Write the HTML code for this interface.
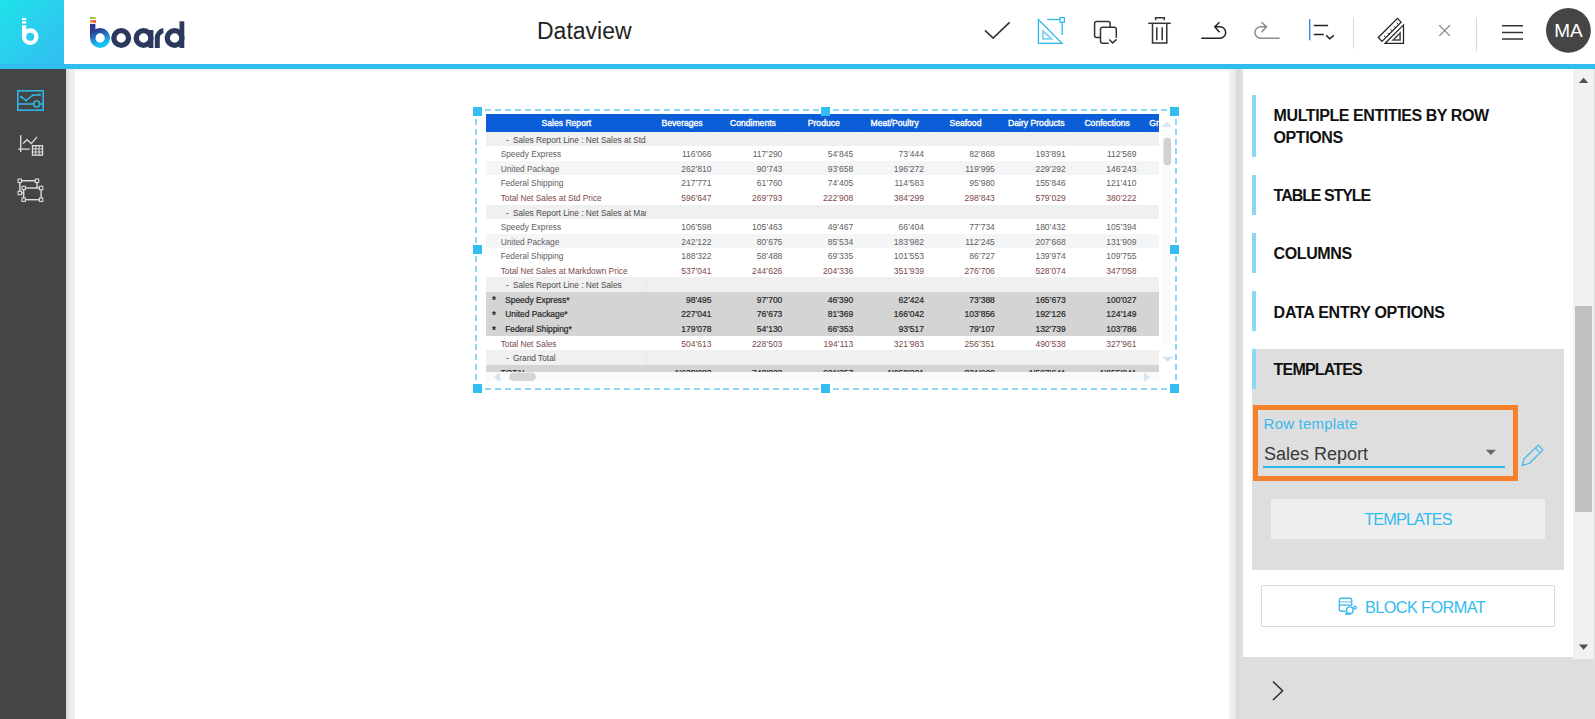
<!DOCTYPE html><html><head><meta charset="utf-8"><style>
*{box-sizing:border-box;margin:0;padding:0}
html,body{width:1595px;height:719px;overflow:hidden;background:#fff;font-family:"Liberation Sans",sans-serif;position:relative}
.abs{position:absolute}
#hdr{left:0;top:0;width:1595px;height:64px;background:#fff}
#logobox{left:0;top:0;width:64px;height:64px;background:linear-gradient(135deg,#1ee3e9 0%,#2ccbee 60%,#33bdf0 100%)}
#bline{left:0;top:64px;width:1595px;height:5px;background:#31bcf0}
#tline{left:66px;top:69px;width:1529px;height:2px;background:#f6f6f6}
#side{left:0;top:69px;width:66px;height:650px;background:#454545}
#sshadow{left:66px;top:69px;width:9px;height:650px;background:linear-gradient(90deg,#d6d6d6 0%,#dddddd 22%,#ebebeb 45%,#eeeeee 100%)}
#title{left:537px;top:15px;font-size:23px;color:#222;line-height:32px}
#rshadow{left:1229px;top:69px;width:9px;height:650px;background:linear-gradient(90deg,#f4f4f4,#e8e8e8 75%,#cfcfcf)}
#rgray{left:1238px;top:69px;width:357px;height:650px;background:#dedede}
#rpanel{left:1243px;top:69px;width:330px;height:588px;background:#fff}
#rscroll{left:1573px;top:69px;width:21px;height:590px;background:#f1f1f1}
.pbar{left:1252px;width:4px;background:#8fd6f2}
.ph{left:1273.6px;font-weight:bold;font-size:16px;line-height:22px;color:#111;white-space:nowrap}

.th{color:#fff;font-size:8.6px;-webkit-text-stroke:0.35px #fff;text-align:center;white-space:nowrap;overflow:hidden}
.tn,.tt,.tb,.tsec{font-size:8.3px;white-space:nowrap}
.tn{color:#606060}
.tsec{color:#4a4a4a}
.tt{color:#7d4848}
.tb{color:#2a2a2a;font-size:8.4px;-webkit-text-stroke:0.22px #2a2a2a}
.num{text-align:right;font-size:8.5px}
.tb.num{font-size:8.5px}
.star{font-size:10px;font-weight:bold;color:#222;-webkit-text-stroke:0}
</style></head><body>
<div id="hdr" class="abs"></div>
<div id="logobox" class="abs"></div>
<div id="bline" class="abs"></div>
<div id="tline" class="abs"></div>
<div id="side" class="abs"></div>
<div id="sshadow" class="abs"></div>
<svg class="abs" style="left:0;top:69px" width="66" height="200" viewBox="0 69 66 200" fill="none">
<g stroke="#2fb8e6" stroke-width="1.6">
<rect x="17.8" y="90.8" width="25.4" height="19.4"/>
<path d="M17.8 104 H33.7 M39.7 104 H43.2"/>
<circle cx="36.7" cy="104" r="3"/>
<polyline points="21.3,96.9 26,100.5 32.7,95.3 39.8,94.7" stroke-width="1.4"/>
</g>
<g fill="#2fb8e6"><circle cx="21.3" cy="96.9" r="1.2"/><circle cx="26" cy="100.5" r="1.1"/><circle cx="32.7" cy="95.3" r="1"/><circle cx="39.8" cy="94.7" r="1.2"/></g>
<g stroke="#dcdcdc" stroke-width="1.4">
<path d="M20.7 135.2 V151.9 M18.1 149.1 H29.8"/>
<polyline points="23.1,143.6 27,139.7 31.4,143.6 37,136.9"/>
<rect x="32.5" y="145.7" width="10" height="9.4"/>
<path d="M32.5 148.9 H42.5 M32.5 152 H42.5 M35.8 145.7 V155.1 M39.1 145.7 V155.1" stroke-width="1"/>
</g>
<g stroke="#dcdcdc" stroke-width="1.4" fill="#454545">
<path d="M19.8 180.8 H37 V188 M19.8 180.8 V193 H23.7"/>
<rect x="23.7" y="188" width="17.4" height="11.7"/>
<rect x="18.1" y="179.1" width="3.4" height="3.4" stroke-width="1.1"/>
<rect x="35.3" y="179.1" width="3.4" height="3.4" stroke-width="1.1"/>
<rect x="18.1" y="191.3" width="3.4" height="3.4" stroke-width="1.1"/>
<rect x="22" y="186.3" width="3.4" height="3.4" stroke-width="1.1"/>
<rect x="39.4" y="186.3" width="3.4" height="3.4" stroke-width="1.1"/>
<rect x="22" y="198" width="3.4" height="3.4" stroke-width="1.1"/>
<rect x="39.4" y="198" width="3.4" height="3.4" stroke-width="1.1"/>
</g>
</svg>

<div id="title" class="abs">Dataview</div>
<svg class="abs" style="left:0;top:0" width="1595" height="64" viewBox="0 0 1595 64" fill="none" stroke-linecap="butt" stroke-linejoin="miter">
<!-- b icon -->
<g fill="#fff" stroke="none">
<rect x="22" y="18" width="4.2" height="2"/>
<rect x="22" y="21.2" width="4.2" height="2.4"/>
<rect x="22" y="25.2" width="4.2" height="11.5"/>
</g>
<circle cx="30.2" cy="36.7" r="6.2" stroke="#fff" stroke-width="4.3"/>
<!-- board logo -->
<defs>
<linearGradient id="bg1" x1="0" y1="0" x2="0.3" y2="1"><stop offset="0" stop-color="#2a3a8e"/><stop offset="0.5" stop-color="#2479c8"/><stop offset="1" stop-color="#16c3f2"/></linearGradient>
<linearGradient id="cb1" x1="0" y1="0" x2="1" y2="0"><stop offset="0" stop-color="#5ec15a"/><stop offset="1" stop-color="#e8c93a"/></linearGradient>
<linearGradient id="cb2" x1="0" y1="0" x2="1" y2="0"><stop offset="0" stop-color="#f59a3a"/><stop offset="1" stop-color="#e8443a"/></linearGradient>
</defs>
<rect x="90" y="17" width="6" height="2" fill="url(#cb1)"/>
<rect x="90" y="20.1" width="6" height="2.6" fill="url(#cb2)"/>
<rect x="90" y="23.9" width="5.4" height="14.1" fill="#2a3a8e"/>
<circle cx="100.1" cy="38" r="7.35" stroke="url(#bg1)" stroke-width="5.3"/>
<circle cx="121.2" cy="38" r="7.35" stroke="#2b3a5c" stroke-width="5.3"/>
<circle cx="143.6" cy="38" r="7.35" stroke="#2b3a5c" stroke-width="5.3"/>
<rect x="148.6" y="30" width="4.8" height="18" fill="#2b3a5c"/>
<path d="M154.8 48 V38 A10 10 0 0 1 163.4 28 V33.2 A5 5 0 0 0 159.8 38 V48 Z" fill="#2b3a5c"/>
<circle cx="174.6" cy="38" r="7.35" stroke="#2b3a5c" stroke-width="5.3"/>
<rect x="179.5" y="21.3" width="4.8" height="26.7" fill="#2b3a5c"/>
<!-- check -->
<polyline points="985,30.3 993.1,38.1 1009.6,22.3" stroke="#333" stroke-width="1.6"/>
<!-- triangle icon -->
<g stroke="#2eb6ea" stroke-width="1.3">
<path d="M1038.4 19.6 V43.3 H1062 Z"/>
<path d="M1043 31 V38.9 H1051.4 Z" stroke="#7fd0f2" stroke-width="1.8"/>
<path d="M1047.2 19.5 H1059.8"/>
<rect x="1060" y="17.6" width="4.4" height="4.6" stroke-width="1.2"/>
<path d="M1062.2 22.2 V35"/>
</g>
<!-- copy icon -->
<g stroke="#333" stroke-width="1.5">
<path d="M1100.5 37.4 H1096.6 A2 2 0 0 1 1094.6 35.4 V23.5 A2 2 0 0 1 1096.6 21.5 H1108.1 A2 2 0 0 1 1110.1 23.5 V27.3"/>
<path d="M1108.7 43.2 H1102.5 A2 2 0 0 1 1100.5 41.2 V29.3 A2 2 0 0 1 1102.5 27.3 H1114.3 A2 2 0 0 1 1116.3 29.3 V37.7"/>
<polyline points="1109.3,39.4 1112.7,42.9 1116.6,39.4"/>
</g>
<!-- trash -->
<g stroke="#333" stroke-width="1.5">
<path d="M1148.2 23.3 H1170.8"/>
<path d="M1155.6 20.2 V17.8 H1164.3 V20.2"/>
<path d="M1152.5 23.3 V43 H1166.8 V23.3"/>
<path d="M1156.8 27.2 V40.2 M1162.2 27.2 V40.2"/>
</g>
<!-- undo -->
<g stroke="#222" stroke-width="1.5">
<path d="M1201.2 38.2 H1220 A5.7 5.7 0 0 0 1220 26.8 H1215.2"/>
<polyline points="1219.5,22.2 1214.8,26.8 1219.5,32.3"/>
</g>
<!-- redo -->
<g stroke="#8a8a8a" stroke-width="1.5">
<path d="M1279.6 38.2 H1260.6 A5.7 5.7 0 0 1 1260.6 26.8 H1266.4"/>
<polyline points="1261.5,22.2 1266.4,26.8 1261.5,32.3"/>
</g>
<!-- align -->
<path d="M1309.7 19.2 V40.3" stroke="#3a90e0" stroke-width="1.5"/>
<g stroke="#222" stroke-width="1.5">
<path d="M1313.8 25.4 H1328.1 M1313.8 34.4 H1323.8"/>
<polyline points="1326.2,35.4 1329.8,38.8 1333.8,35.4"/>
</g>
<path d="M1353.5 17.2 V48.6" stroke="#d8d8d8" stroke-width="1"/>
<!-- ruler -->
<g stroke="#222" stroke-width="1.25" stroke-linejoin="miter">
<path d="M1378.3 37.5 L1397.5 18.3 L1401.1 22.2 L1382 41.4 Z"/>
<path d="M1385.2 43.3 L1403.5 24.9 V43.3 Z"/>
<path d="M1393.1 40 L1400.1 33 V40 Z" stroke-width="1.5" stroke="#444"/>
<path d="M1385.82 37.56 l-1.84 -1.84 M1389.07 34.30 l-1.41 -1.41 M1392.31 31.03 l-1.84 -1.84 M1395.56 27.77 l-1.41 -1.41 M1398.62 24.70 l-1.84 -1.84" stroke-width="1"/>
</g>
<!-- close -->
<path d="M1439.3 25.3 L1450 35.9 M1450 25.3 L1439.3 35.9" stroke="#888" stroke-width="1.3"/>
<path d="M1476.5 17.2 V51.5" stroke="#d8d8d8" stroke-width="1"/>
<!-- hamburger -->
<path d="M1502 25.7 H1523 M1502 32.4 H1523 M1502 39.1 H1523" stroke="#333" stroke-width="1.5"/>
<circle cx="1568.4" cy="30.4" r="22.4" fill="#454545"/>
</svg>
<div class="abs" style="left:1546px;top:20.5px;width:45px;text-align:center;color:#fff;font-size:19px;line-height:20px">MA</div>

<div class="abs" style="left:486.0px;top:114.2px;width:672.7px;height:257.8px;overflow:hidden">
<div class="abs" style="left:0;top:0;width:752.7px;height:17.60000000000001px;background:#0b5ed7"></div>
<div class="abs" style="left:160.20px;top:0;width:1px;height:17.60000000000001px;background:#0b5bd3"></div>
<div class="abs" style="left:231.03px;top:0;width:1px;height:17.60000000000001px;background:#0b5bd3"></div>
<div class="abs" style="left:301.86px;top:0;width:1px;height:17.60000000000001px;background:#0b5bd3"></div>
<div class="abs" style="left:372.69px;top:0;width:1px;height:17.60000000000001px;background:#0b5bd3"></div>
<div class="abs" style="left:443.52px;top:0;width:1px;height:17.60000000000001px;background:#0b5bd3"></div>
<div class="abs" style="left:514.35px;top:0;width:1px;height:17.60000000000001px;background:#0b5bd3"></div>
<div class="abs" style="left:585.18px;top:0;width:1px;height:17.60000000000001px;background:#0b5bd3"></div>
<div class="abs" style="left:656.01px;top:0;width:1px;height:17.60000000000001px;background:#0b5bd3"></div>
<div class="abs th" style="left:0;top:0;width:160.70px;height:17.60000000000001px;line-height:18.40000000000001px">Sales Report</div>
<div class="abs th" style="left:160.70px;top:0;width:70.83px;height:17.60000000000001px;line-height:18.40000000000001px">Beverages</div>
<div class="abs th" style="left:231.53px;top:0;width:70.83px;height:17.60000000000001px;line-height:18.40000000000001px">Condiments</div>
<div class="abs th" style="left:302.36px;top:0;width:70.83px;height:17.60000000000001px;line-height:18.40000000000001px">Produce</div>
<div class="abs th" style="left:373.19px;top:0;width:70.83px;height:17.60000000000001px;line-height:18.40000000000001px">Meat/Poultry</div>
<div class="abs th" style="left:444.02px;top:0;width:70.83px;height:17.60000000000001px;line-height:18.40000000000001px">Seafood</div>
<div class="abs th" style="left:514.85px;top:0;width:70.83px;height:17.60000000000001px;line-height:18.40000000000001px">Dairy Products</div>
<div class="abs th" style="left:585.68px;top:0;width:70.83px;height:17.60000000000001px;line-height:18.40000000000001px">Confections</div>
<div class="abs th" style="left:656.51px;top:0;width:70.83px;height:17.60000000000001px;line-height:18.40000000000001px">Grains/Cereals</div>
<div class="abs" style="left:0;top:17.600px;width:752.7px;height:14.670px;background:#f0f0f0"></div>
<div class="abs tsec" style="left:20px;top:18.600px;line-height:14.57px">-</div>
<div class="abs tsec" style="left:26.9px;top:18.600px;width:133.70px;overflow:hidden;line-height:14.57px">Sales Report Line : Net Sales at Std</div>
<div class="abs" style="left:160.20px;top:17.600px;width:1px;height:14.570px;background:#e8e8e8"></div>
<div class="abs" style="left:0;top:32.170px;width:752.7px;height:14.670px;background:#ffffff"></div>
<div class="abs tn" style="left:14.7px;top:33.170px;line-height:14.57px">Speedy Express</div>
<div class="abs tn num" style="left:160.70px;top:33.170px;width:64.83px;line-height:14.57px">116’066</div>
<div class="abs tn num" style="left:231.53px;top:33.170px;width:64.83px;line-height:14.57px">117’290</div>
<div class="abs tn num" style="left:302.36px;top:33.170px;width:64.83px;line-height:14.57px">54’845</div>
<div class="abs tn num" style="left:373.19px;top:33.170px;width:64.83px;line-height:14.57px">73’444</div>
<div class="abs tn num" style="left:444.02px;top:33.170px;width:64.83px;line-height:14.57px">82’868</div>
<div class="abs tn num" style="left:514.85px;top:33.170px;width:64.83px;line-height:14.57px">193’891</div>
<div class="abs tn num" style="left:585.68px;top:33.170px;width:64.83px;line-height:14.57px">112’569</div>
<div class="abs tn num" style="left:656.51px;top:33.170px;width:64.83px;line-height:14.57px">98’120</div>
<div class="abs" style="left:0;top:46.740px;width:752.7px;height:14.670px;background:#f4f5f7"></div>
<div class="abs tn" style="left:14.7px;top:47.740px;line-height:14.57px">United Package</div>
<div class="abs tn num" style="left:160.70px;top:47.740px;width:64.83px;line-height:14.57px">262’810</div>
<div class="abs tn num" style="left:231.53px;top:47.740px;width:64.83px;line-height:14.57px">90’743</div>
<div class="abs tn num" style="left:302.36px;top:47.740px;width:64.83px;line-height:14.57px">93’658</div>
<div class="abs tn num" style="left:373.19px;top:47.740px;width:64.83px;line-height:14.57px">196’272</div>
<div class="abs tn num" style="left:444.02px;top:47.740px;width:64.83px;line-height:14.57px">119’995</div>
<div class="abs tn num" style="left:514.85px;top:47.740px;width:64.83px;line-height:14.57px">229’292</div>
<div class="abs tn num" style="left:585.68px;top:47.740px;width:64.83px;line-height:14.57px">146’243</div>
<div class="abs tn num" style="left:656.51px;top:47.740px;width:64.83px;line-height:14.57px">88’312</div>
<div class="abs" style="left:0;top:61.310px;width:752.7px;height:14.670px;background:#ffffff"></div>
<div class="abs tn" style="left:14.7px;top:62.310px;line-height:14.57px">Federal Shipping</div>
<div class="abs tn num" style="left:160.70px;top:62.310px;width:64.83px;line-height:14.57px">217’771</div>
<div class="abs tn num" style="left:231.53px;top:62.310px;width:64.83px;line-height:14.57px">61’760</div>
<div class="abs tn num" style="left:302.36px;top:62.310px;width:64.83px;line-height:14.57px">74’405</div>
<div class="abs tn num" style="left:373.19px;top:62.310px;width:64.83px;line-height:14.57px">114’583</div>
<div class="abs tn num" style="left:444.02px;top:62.310px;width:64.83px;line-height:14.57px">95’980</div>
<div class="abs tn num" style="left:514.85px;top:62.310px;width:64.83px;line-height:14.57px">155’846</div>
<div class="abs tn num" style="left:585.68px;top:62.310px;width:64.83px;line-height:14.57px">121’410</div>
<div class="abs tn num" style="left:656.51px;top:62.310px;width:64.83px;line-height:14.57px">77’655</div>
<div class="abs" style="left:0;top:75.880px;width:752.7px;height:14.670px;background:#ffffff"></div>
<div class="abs tt" style="left:14.7px;top:76.880px;line-height:14.57px">Total Net Sales at Std Price</div>
<div class="abs tt num" style="left:160.70px;top:76.880px;width:64.83px;line-height:14.57px">596’647</div>
<div class="abs tt num" style="left:231.53px;top:76.880px;width:64.83px;line-height:14.57px">269’793</div>
<div class="abs tt num" style="left:302.36px;top:76.880px;width:64.83px;line-height:14.57px">222’908</div>
<div class="abs tt num" style="left:373.19px;top:76.880px;width:64.83px;line-height:14.57px">384’299</div>
<div class="abs tt num" style="left:444.02px;top:76.880px;width:64.83px;line-height:14.57px">298’843</div>
<div class="abs tt num" style="left:514.85px;top:76.880px;width:64.83px;line-height:14.57px">579’029</div>
<div class="abs tt num" style="left:585.68px;top:76.880px;width:64.83px;line-height:14.57px">380’222</div>
<div class="abs tt num" style="left:656.51px;top:76.880px;width:64.83px;line-height:14.57px">264’087</div>
<div class="abs" style="left:0;top:90.450px;width:752.7px;height:14.670px;background:#f0f0f0"></div>
<div class="abs tsec" style="left:20px;top:91.450px;line-height:14.57px">-</div>
<div class="abs tsec" style="left:26.9px;top:91.450px;width:133.70px;overflow:hidden;line-height:14.57px">Sales Report Line : Net Sales at Mar</div>
<div class="abs" style="left:160.20px;top:90.450px;width:1px;height:14.570px;background:#e8e8e8"></div>
<div class="abs" style="left:0;top:105.020px;width:752.7px;height:14.670px;background:#ffffff"></div>
<div class="abs tn" style="left:14.7px;top:106.020px;line-height:14.57px">Speedy Express</div>
<div class="abs tn num" style="left:160.70px;top:106.020px;width:64.83px;line-height:14.57px">106’598</div>
<div class="abs tn num" style="left:231.53px;top:106.020px;width:64.83px;line-height:14.57px">105’463</div>
<div class="abs tn num" style="left:302.36px;top:106.020px;width:64.83px;line-height:14.57px">49’467</div>
<div class="abs tn num" style="left:373.19px;top:106.020px;width:64.83px;line-height:14.57px">66’404</div>
<div class="abs tn num" style="left:444.02px;top:106.020px;width:64.83px;line-height:14.57px">77’734</div>
<div class="abs tn num" style="left:514.85px;top:106.020px;width:64.83px;line-height:14.57px">180’432</div>
<div class="abs tn num" style="left:585.68px;top:106.020px;width:64.83px;line-height:14.57px">105’394</div>
<div class="abs tn num" style="left:656.51px;top:106.020px;width:64.83px;line-height:14.57px">90’211</div>
<div class="abs" style="left:0;top:119.590px;width:752.7px;height:14.670px;background:#f4f5f7"></div>
<div class="abs tn" style="left:14.7px;top:120.590px;line-height:14.57px">United Package</div>
<div class="abs tn num" style="left:160.70px;top:120.590px;width:64.83px;line-height:14.57px">242’122</div>
<div class="abs tn num" style="left:231.53px;top:120.590px;width:64.83px;line-height:14.57px">80’675</div>
<div class="abs tn num" style="left:302.36px;top:120.590px;width:64.83px;line-height:14.57px">85’534</div>
<div class="abs tn num" style="left:373.19px;top:120.590px;width:64.83px;line-height:14.57px">183’982</div>
<div class="abs tn num" style="left:444.02px;top:120.590px;width:64.83px;line-height:14.57px">112’245</div>
<div class="abs tn num" style="left:514.85px;top:120.590px;width:64.83px;line-height:14.57px">207’668</div>
<div class="abs tn num" style="left:585.68px;top:120.590px;width:64.83px;line-height:14.57px">131’909</div>
<div class="abs tn num" style="left:656.51px;top:120.590px;width:64.83px;line-height:14.57px">80’044</div>
<div class="abs" style="left:0;top:134.160px;width:752.7px;height:14.670px;background:#ffffff"></div>
<div class="abs tn" style="left:14.7px;top:135.160px;line-height:14.57px">Federal Shipping</div>
<div class="abs tn num" style="left:160.70px;top:135.160px;width:64.83px;line-height:14.57px">188’322</div>
<div class="abs tn num" style="left:231.53px;top:135.160px;width:64.83px;line-height:14.57px">58’488</div>
<div class="abs tn num" style="left:302.36px;top:135.160px;width:64.83px;line-height:14.57px">69’335</div>
<div class="abs tn num" style="left:373.19px;top:135.160px;width:64.83px;line-height:14.57px">101’553</div>
<div class="abs tn num" style="left:444.02px;top:135.160px;width:64.83px;line-height:14.57px">86’727</div>
<div class="abs tn num" style="left:514.85px;top:135.160px;width:64.83px;line-height:14.57px">139’974</div>
<div class="abs tn num" style="left:585.68px;top:135.160px;width:64.83px;line-height:14.57px">109’755</div>
<div class="abs tn num" style="left:656.51px;top:135.160px;width:64.83px;line-height:14.57px">70’123</div>
<div class="abs" style="left:0;top:148.730px;width:752.7px;height:14.670px;background:#ffffff"></div>
<div class="abs tt" style="left:14.7px;top:149.730px;line-height:14.57px">Total Net Sales at Markdown Price</div>
<div class="abs tt num" style="left:160.70px;top:149.730px;width:64.83px;line-height:14.57px">537’041</div>
<div class="abs tt num" style="left:231.53px;top:149.730px;width:64.83px;line-height:14.57px">244’626</div>
<div class="abs tt num" style="left:302.36px;top:149.730px;width:64.83px;line-height:14.57px">204’336</div>
<div class="abs tt num" style="left:373.19px;top:149.730px;width:64.83px;line-height:14.57px">351’939</div>
<div class="abs tt num" style="left:444.02px;top:149.730px;width:64.83px;line-height:14.57px">276’706</div>
<div class="abs tt num" style="left:514.85px;top:149.730px;width:64.83px;line-height:14.57px">528’074</div>
<div class="abs tt num" style="left:585.68px;top:149.730px;width:64.83px;line-height:14.57px">347’058</div>
<div class="abs tt num" style="left:656.51px;top:149.730px;width:64.83px;line-height:14.57px">240’378</div>
<div class="abs" style="left:0;top:163.300px;width:752.7px;height:14.670px;background:#f0f0f0"></div>
<div class="abs tsec" style="left:20px;top:164.300px;line-height:14.57px">-</div>
<div class="abs tsec" style="left:26.9px;top:164.300px;width:133.70px;overflow:hidden;line-height:14.57px">Sales Report Line : Net Sales</div>
<div class="abs" style="left:160.20px;top:163.300px;width:1px;height:14.570px;background:#e8e8e8"></div>
<div class="abs" style="left:0;top:177.870px;width:752.7px;height:14.670px;background:#d4d4d4"></div>
<div class="abs star" style="left:6px;top:180.270px;line-height:14.57px">*</div>
<div class="abs tb" style="left:19.2px;top:178.670px;line-height:14.57px">Speedy Express*</div>
<div class="abs tb num" style="left:160.70px;top:178.670px;width:64.83px;line-height:14.57px">98’495</div>
<div class="abs tb num" style="left:231.53px;top:178.670px;width:64.83px;line-height:14.57px">97’700</div>
<div class="abs tb num" style="left:302.36px;top:178.670px;width:64.83px;line-height:14.57px">46’390</div>
<div class="abs tb num" style="left:373.19px;top:178.670px;width:64.83px;line-height:14.57px">62’424</div>
<div class="abs tb num" style="left:444.02px;top:178.670px;width:64.83px;line-height:14.57px">73’388</div>
<div class="abs tb num" style="left:514.85px;top:178.670px;width:64.83px;line-height:14.57px">165’673</div>
<div class="abs tb num" style="left:585.68px;top:178.670px;width:64.83px;line-height:14.57px">100’027</div>
<div class="abs tb num" style="left:656.51px;top:178.670px;width:64.83px;line-height:14.57px">84’551</div>
<div class="abs" style="left:0;top:192.440px;width:752.7px;height:14.670px;background:#d4d4d4"></div>
<div class="abs star" style="left:6px;top:194.840px;line-height:14.57px">*</div>
<div class="abs tb" style="left:19.2px;top:193.240px;line-height:14.57px">United Package*</div>
<div class="abs tb num" style="left:160.70px;top:193.240px;width:64.83px;line-height:14.57px">227’041</div>
<div class="abs tb num" style="left:231.53px;top:193.240px;width:64.83px;line-height:14.57px">76’673</div>
<div class="abs tb num" style="left:302.36px;top:193.240px;width:64.83px;line-height:14.57px">81’369</div>
<div class="abs tb num" style="left:373.19px;top:193.240px;width:64.83px;line-height:14.57px">166’042</div>
<div class="abs tb num" style="left:444.02px;top:193.240px;width:64.83px;line-height:14.57px">103’856</div>
<div class="abs tb num" style="left:514.85px;top:193.240px;width:64.83px;line-height:14.57px">192’126</div>
<div class="abs tb num" style="left:585.68px;top:193.240px;width:64.83px;line-height:14.57px">124’149</div>
<div class="abs tb num" style="left:656.51px;top:193.240px;width:64.83px;line-height:14.57px">74’320</div>
<div class="abs" style="left:0;top:207.010px;width:752.7px;height:14.670px;background:#d4d4d4"></div>
<div class="abs star" style="left:6px;top:209.410px;line-height:14.57px">*</div>
<div class="abs tb" style="left:19.2px;top:207.810px;line-height:14.57px">Federal Shipping*</div>
<div class="abs tb num" style="left:160.70px;top:207.810px;width:64.83px;line-height:14.57px">179’078</div>
<div class="abs tb num" style="left:231.53px;top:207.810px;width:64.83px;line-height:14.57px">54’130</div>
<div class="abs tb num" style="left:302.36px;top:207.810px;width:64.83px;line-height:14.57px">66’353</div>
<div class="abs tb num" style="left:373.19px;top:207.810px;width:64.83px;line-height:14.57px">93’517</div>
<div class="abs tb num" style="left:444.02px;top:207.810px;width:64.83px;line-height:14.57px">79’107</div>
<div class="abs tb num" style="left:514.85px;top:207.810px;width:64.83px;line-height:14.57px">132’739</div>
<div class="abs tb num" style="left:585.68px;top:207.810px;width:64.83px;line-height:14.57px">103’786</div>
<div class="abs tb num" style="left:656.51px;top:207.810px;width:64.83px;line-height:14.57px">65’002</div>
<div class="abs" style="left:0;top:221.580px;width:752.7px;height:14.670px;background:#ffffff"></div>
<div class="abs tt" style="left:14.7px;top:222.580px;line-height:14.57px">Total Net Sales</div>
<div class="abs tt num" style="left:160.70px;top:222.580px;width:64.83px;line-height:14.57px">504’613</div>
<div class="abs tt num" style="left:231.53px;top:222.580px;width:64.83px;line-height:14.57px">228’503</div>
<div class="abs tt num" style="left:302.36px;top:222.580px;width:64.83px;line-height:14.57px">194’113</div>
<div class="abs tt num" style="left:373.19px;top:222.580px;width:64.83px;line-height:14.57px">321’983</div>
<div class="abs tt num" style="left:444.02px;top:222.580px;width:64.83px;line-height:14.57px">256’351</div>
<div class="abs tt num" style="left:514.85px;top:222.580px;width:64.83px;line-height:14.57px">490’538</div>
<div class="abs tt num" style="left:585.68px;top:222.580px;width:64.83px;line-height:14.57px">327’961</div>
<div class="abs tt num" style="left:656.51px;top:222.580px;width:64.83px;line-height:14.57px">223’873</div>
<div class="abs" style="left:0;top:236.150px;width:752.7px;height:14.670px;background:#f0f0f0"></div>
<div class="abs tsec" style="left:20px;top:237.150px;line-height:14.57px">-</div>
<div class="abs tsec" style="left:26.9px;top:237.150px;width:133.70px;overflow:hidden;line-height:14.57px">Grand Total</div>
<div class="abs" style="left:160.20px;top:236.150px;width:1px;height:14.570px;background:#e8e8e8"></div>
<div class="abs" style="left:0;top:250.720px;width:752.7px;height:14.670px;background:#d4d4d4"></div>
<div class="abs tb" style="left:14.7px;top:251.520px;line-height:14.57px">TOTAL</div>
<div class="abs tb num" style="left:160.70px;top:251.520px;width:64.83px;line-height:14.57px">1’638’283</div>
<div class="abs tb num" style="left:231.53px;top:251.520px;width:64.83px;line-height:14.57px">742’833</div>
<div class="abs tb num" style="left:302.36px;top:251.520px;width:64.83px;line-height:14.57px">621’357</div>
<div class="abs tb num" style="left:373.19px;top:251.520px;width:64.83px;line-height:14.57px">1’058’221</div>
<div class="abs tb num" style="left:444.02px;top:251.520px;width:64.83px;line-height:14.57px">831’900</div>
<div class="abs tb num" style="left:514.85px;top:251.520px;width:64.83px;line-height:14.57px">1’597’641</div>
<div class="abs tb num" style="left:585.68px;top:251.520px;width:64.83px;line-height:14.57px">1’055’241</div>
<div class="abs tb num" style="left:656.51px;top:251.520px;width:64.83px;line-height:14.57px">728’338</div>
</div>
<svg class="abs" style="left:0;top:0" width="1595" height="719" viewBox="0 0 1595 719" fill="none">
<!-- vertical scrollbar -->
<rect x="1161.8" y="132" width="9.2" height="213" fill="#fafafa"/>
<rect x="1163.6" y="137.8" width="7.6" height="27.4" rx="3.8" fill="#d0d0d0"/>
<path d="M1161.5 126.8 L1167 121.7 L1172.5 126.8 Z" fill="#d7e6f2"/>
<path d="M1162.2 356.7 L1173.3 356.7 L1167.75 362.1 Z" fill="#cfe3f3"/>
<!-- horizontal scrollbar -->
<rect x="486" y="372" width="673" height="9" fill="#fafafa"/>
<rect x="509.2" y="372.5" width="26.8" height="8.5" rx="4.25" fill="#d5d5d5"/>
<path d="M500 372.2 L494 377 L500 381.8 Z" fill="#d3e4f2"/>
<path d="M1144 372.2 L1150 377 L1144 381.8 Z" fill="#d3e4f2"/>
<!-- dashed selection -->
<g fill="#8dd7f4"><rect x="485" y="109" width="6" height="2"/><rect x="495" y="109" width="6" height="2"/><rect x="505" y="109" width="6" height="2"/><rect x="515" y="109" width="6" height="2"/><rect x="525" y="109" width="6" height="2"/><rect x="535" y="109" width="6" height="2"/><rect x="545" y="109" width="6" height="2"/><rect x="555" y="109" width="6" height="2"/><rect x="564" y="109" width="6" height="2"/><rect x="574" y="109" width="6" height="2"/><rect x="584" y="109" width="6" height="2"/><rect x="594" y="109" width="6" height="2"/><rect x="604" y="109" width="6" height="2"/><rect x="614" y="109" width="6" height="2"/><rect x="624" y="109" width="6" height="2"/><rect x="634" y="109" width="6" height="2"/><rect x="644" y="109" width="6" height="2"/><rect x="654" y="109" width="6" height="2"/><rect x="664" y="109" width="6" height="2"/><rect x="674" y="109" width="6" height="2"/><rect x="684" y="109" width="6" height="2"/><rect x="694" y="109" width="6" height="2"/><rect x="704" y="109" width="6" height="2"/><rect x="714" y="109" width="6" height="2"/><rect x="723" y="109" width="6" height="2"/><rect x="733" y="109" width="6" height="2"/><rect x="743" y="109" width="6" height="2"/><rect x="753" y="109" width="6" height="2"/><rect x="763" y="109" width="6" height="2"/><rect x="773" y="109" width="6" height="2"/><rect x="783" y="109" width="6" height="2"/><rect x="793" y="109" width="6" height="2"/><rect x="803" y="109" width="6" height="2"/><rect x="813" y="109" width="6" height="2"/><rect x="833" y="109" width="6" height="2"/><rect x="843" y="109" width="6" height="2"/><rect x="853" y="109" width="6" height="2"/><rect x="863" y="109" width="6" height="2"/><rect x="873" y="109" width="6" height="2"/><rect x="883" y="109" width="6" height="2"/><rect x="893" y="109" width="6" height="2"/><rect x="902" y="109" width="6" height="2"/><rect x="912" y="109" width="6" height="2"/><rect x="922" y="109" width="6" height="2"/><rect x="932" y="109" width="6" height="2"/><rect x="942" y="109" width="6" height="2"/><rect x="952" y="109" width="6" height="2"/><rect x="962" y="109" width="6" height="2"/><rect x="972" y="109" width="6" height="2"/><rect x="982" y="109" width="6" height="2"/><rect x="992" y="109" width="6" height="2"/><rect x="1002" y="109" width="6" height="2"/><rect x="1012" y="109" width="6" height="2"/><rect x="1022" y="109" width="6" height="2"/><rect x="1032" y="109" width="6" height="2"/><rect x="1041" y="109" width="6" height="2"/><rect x="1051" y="109" width="6" height="2"/><rect x="1061" y="109" width="6" height="2"/><rect x="1071" y="109" width="6" height="2"/><rect x="1081" y="109" width="6" height="2"/><rect x="1091" y="109" width="6" height="2"/><rect x="1101" y="109" width="6" height="2"/><rect x="1111" y="109" width="6" height="2"/><rect x="1121" y="109" width="6" height="2"/><rect x="1131" y="109" width="6" height="2"/><rect x="1141" y="109" width="6" height="2"/><rect x="1151" y="109" width="6" height="2"/><rect x="1161" y="109" width="6" height="2"/><rect x="485" y="388" width="6" height="2"/><rect x="495" y="388" width="6" height="2"/><rect x="505" y="388" width="6" height="2"/><rect x="515" y="388" width="6" height="2"/><rect x="525" y="388" width="6" height="2"/><rect x="535" y="388" width="6" height="2"/><rect x="545" y="388" width="6" height="2"/><rect x="555" y="388" width="6" height="2"/><rect x="564" y="388" width="6" height="2"/><rect x="574" y="388" width="6" height="2"/><rect x="584" y="388" width="6" height="2"/><rect x="594" y="388" width="6" height="2"/><rect x="604" y="388" width="6" height="2"/><rect x="614" y="388" width="6" height="2"/><rect x="624" y="388" width="6" height="2"/><rect x="634" y="388" width="6" height="2"/><rect x="644" y="388" width="6" height="2"/><rect x="654" y="388" width="6" height="2"/><rect x="664" y="388" width="6" height="2"/><rect x="674" y="388" width="6" height="2"/><rect x="684" y="388" width="6" height="2"/><rect x="694" y="388" width="6" height="2"/><rect x="704" y="388" width="6" height="2"/><rect x="714" y="388" width="6" height="2"/><rect x="723" y="388" width="6" height="2"/><rect x="733" y="388" width="6" height="2"/><rect x="743" y="388" width="6" height="2"/><rect x="753" y="388" width="6" height="2"/><rect x="763" y="388" width="6" height="2"/><rect x="773" y="388" width="6" height="2"/><rect x="783" y="388" width="6" height="2"/><rect x="793" y="388" width="6" height="2"/><rect x="803" y="388" width="6" height="2"/><rect x="813" y="388" width="6" height="2"/><rect x="833" y="388" width="6" height="2"/><rect x="843" y="388" width="6" height="2"/><rect x="853" y="388" width="6" height="2"/><rect x="863" y="388" width="6" height="2"/><rect x="873" y="388" width="6" height="2"/><rect x="883" y="388" width="6" height="2"/><rect x="893" y="388" width="6" height="2"/><rect x="902" y="388" width="6" height="2"/><rect x="912" y="388" width="6" height="2"/><rect x="922" y="388" width="6" height="2"/><rect x="932" y="388" width="6" height="2"/><rect x="942" y="388" width="6" height="2"/><rect x="952" y="388" width="6" height="2"/><rect x="962" y="388" width="6" height="2"/><rect x="972" y="388" width="6" height="2"/><rect x="982" y="388" width="6" height="2"/><rect x="992" y="388" width="6" height="2"/><rect x="1002" y="388" width="6" height="2"/><rect x="1012" y="388" width="6" height="2"/><rect x="1022" y="388" width="6" height="2"/><rect x="1032" y="388" width="6" height="2"/><rect x="1041" y="388" width="6" height="2"/><rect x="1051" y="388" width="6" height="2"/><rect x="1061" y="388" width="6" height="2"/><rect x="1071" y="388" width="6" height="2"/><rect x="1081" y="388" width="6" height="2"/><rect x="1091" y="388" width="6" height="2"/><rect x="1101" y="388" width="6" height="2"/><rect x="1111" y="388" width="6" height="2"/><rect x="1121" y="388" width="6" height="2"/><rect x="1131" y="388" width="6" height="2"/><rect x="1141" y="388" width="6" height="2"/><rect x="1151" y="388" width="6" height="2"/><rect x="1161" y="388" width="6" height="2"/><rect x="475" y="119" width="2" height="6"/><rect x="475" y="129" width="2" height="6"/><rect x="475" y="139" width="2" height="6"/><rect x="475" y="148" width="2" height="6"/><rect x="475" y="158" width="2" height="6"/><rect x="475" y="168" width="2" height="6"/><rect x="475" y="178" width="2" height="6"/><rect x="475" y="188" width="2" height="6"/><rect x="475" y="198" width="2" height="6"/><rect x="475" y="207" width="2" height="6"/><rect x="475" y="217" width="2" height="6"/><rect x="475" y="227" width="2" height="6"/><rect x="475" y="237" width="2" height="6"/><rect x="475" y="256" width="2" height="6"/><rect x="475" y="266" width="2" height="6"/><rect x="475" y="276" width="2" height="6"/><rect x="475" y="285" width="2" height="6"/><rect x="475" y="295" width="2" height="6"/><rect x="475" y="305" width="2" height="6"/><rect x="475" y="315" width="2" height="6"/><rect x="475" y="325" width="2" height="6"/><rect x="475" y="335" width="2" height="6"/><rect x="475" y="344" width="2" height="6"/><rect x="475" y="354" width="2" height="6"/><rect x="475" y="364" width="2" height="6"/><rect x="475" y="374" width="2" height="6"/><rect x="1175" y="119" width="2" height="6"/><rect x="1175" y="129" width="2" height="6"/><rect x="1175" y="139" width="2" height="6"/><rect x="1175" y="148" width="2" height="6"/><rect x="1175" y="158" width="2" height="6"/><rect x="1175" y="168" width="2" height="6"/><rect x="1175" y="178" width="2" height="6"/><rect x="1175" y="188" width="2" height="6"/><rect x="1175" y="198" width="2" height="6"/><rect x="1175" y="207" width="2" height="6"/><rect x="1175" y="217" width="2" height="6"/><rect x="1175" y="227" width="2" height="6"/><rect x="1175" y="237" width="2" height="6"/><rect x="1175" y="256" width="2" height="6"/><rect x="1175" y="266" width="2" height="6"/><rect x="1175" y="276" width="2" height="6"/><rect x="1175" y="285" width="2" height="6"/><rect x="1175" y="295" width="2" height="6"/><rect x="1175" y="305" width="2" height="6"/><rect x="1175" y="315" width="2" height="6"/><rect x="1175" y="325" width="2" height="6"/><rect x="1175" y="335" width="2" height="6"/><rect x="1175" y="344" width="2" height="6"/><rect x="1175" y="354" width="2" height="6"/><rect x="1175" y="364" width="2" height="6"/><rect x="1175" y="374" width="2" height="6"/></g>
<g fill="#33bdf0">
<rect x="473" y="107" width="9" height="9"/><rect x="821" y="107" width="9" height="9"/><rect x="1170" y="107" width="9" height="9"/>
<rect x="473" y="245" width="9" height="9"/><rect x="1170" y="245" width="9" height="9"/>
<rect x="473" y="384" width="9" height="9"/><rect x="821" y="384" width="9" height="9"/><rect x="1170" y="384" width="9" height="9"/>
</g>
</svg>

<div id="rshadow" class="abs"></div>
<div id="rgray" class="abs"></div>
<div id="rpanel" class="abs"></div>
<div id="rscroll" class="abs"></div>
<div class="abs pbar" style="top:95px;height:62px"></div>
<div class="abs ph" style="top:105.1px;letter-spacing:-0.42px">MULTIPLE ENTITIES BY ROW<br>OPTIONS</div>
<div class="abs pbar" style="top:175px;height:40px"></div>
<div class="abs ph" style="top:185.1px;letter-spacing:-1.05px">TABLE STYLE</div>
<div class="abs pbar" style="top:233px;height:40px"></div>
<div class="abs ph" style="top:243.4px;letter-spacing:-0.39px">COLUMNS</div>
<div class="abs pbar" style="top:291px;height:40px"></div>
<div class="abs ph" style="top:301.8px;letter-spacing:-0.26px">DATA ENTRY OPTIONS</div>
<div class="abs" style="left:1252px;top:349.4px;width:312px;height:220.4px;background:#dedede"></div>
<div class="abs pbar" style="top:349.4px;height:39.2px"></div>
<div class="abs ph" style="top:358.8px;letter-spacing:-0.82px">TEMPLATES</div>
<div class="abs" style="left:1253px;top:405px;width:265px;height:76px;border:5px solid #f7802a"></div>
<div class="abs" style="left:1263.6px;top:414px;font-size:15px;line-height:20px;color:#3ab9ec;letter-spacing:0.2px">Row template</div>
<div class="abs" style="left:1264px;top:442.3px;font-size:18px;line-height:24px;color:#3a3a3a">Sales Report</div>
<div class="abs" style="left:1263px;top:466.3px;width:242px;height:2.2px;background:#2fb6ec"></div>
<svg class="abs" style="left:0;top:0" width="1595" height="719" viewBox="0 0 1595 719" fill="none">
<path d="M1485.7 449.8 H1496 L1490.85 455 Z" fill="#6b6b6b"/>
<g stroke="#3ab9ec" stroke-width="1.25" stroke-linejoin="round">
<path d="M1522.1 465.4 L1524.2 458.8 L1538.4 445.1 L1542.9 450.1 L1529.2 463.5 Z"/>
<path d="M1535.6 448.4 L1539.8 452.6"/>
</g>
<g stroke="#3ab9ec" stroke-width="1.4">
<path d="M1345.5 611.3 H1341.4 A2 2 0 0 1 1339.4 609.3 V600.2 A2 2 0 0 1 1341.4 598.2 H1349.7 A2 2 0 0 1 1351.7 600.2 V605.5 M1339.4 605.1 H1351.7"/>
<path d="M1339.8 601.8 H1351.3" stroke="#8fd6f4" stroke-width="1.5"/>
<circle cx="1349.8" cy="610.2" r="3.3"/>
<circle cx="1355" cy="607.8" r="1.4" stroke-width="1.2"/>
<path d="M1345 613.8 H1351" stroke-width="1.8"/>
</g>
<polyline points="1273,681.5 1282.6,690.7 1273,700" stroke="#2a2a2a" stroke-width="1.5"/>
<path d="M1578.9 83.1 L1583.55 77.8 L1588.2 83.1 Z" fill="#505050"/>
<path d="M1578.9 644.5 L1588.2 644.5 L1583.55 649.8 Z" fill="#505050"/>
</svg>
<div class="abs" style="left:1271px;top:499px;width:274px;height:40px;background:#eeeeee;color:#33bcee;font-size:16.3px;line-height:40px;text-align:center;letter-spacing:-0.9px;padding-left:0px">TEMPLATES</div>
<div class="abs" style="left:1261px;top:585px;width:294px;height:42.4px;border:1px solid #d9d9d9;border-radius:2px;background:transparent"></div>
<div class="abs" style="left:1365px;top:594.5px;font-size:16.3px;line-height:24px;color:#33bcee;letter-spacing:-0.6px">BLOCK FORMAT</div>
<div class="abs" style="left:1575px;top:306.1px;width:17px;height:206.4px;background:#c1c1c1"></div>

</body></html>
